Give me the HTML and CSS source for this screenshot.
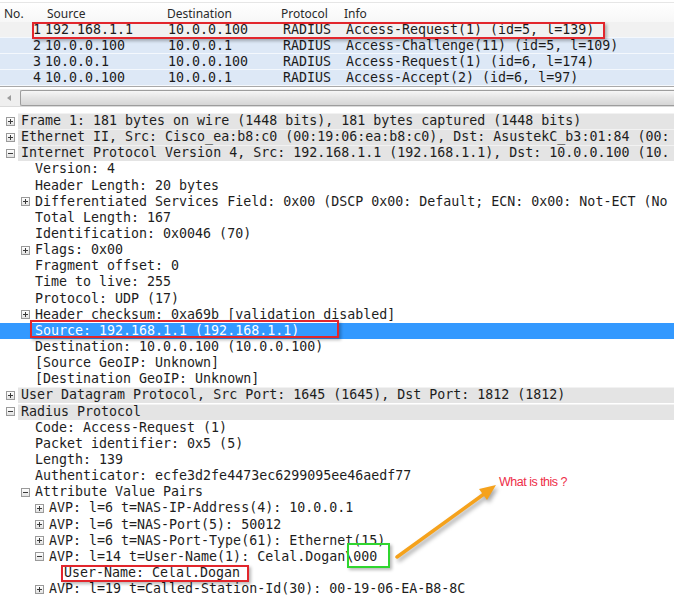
FILE: index.html
```html
<!DOCTYPE html>
<html lang="en">
<head>
    <meta charset="UTF-8">
    <meta name="viewport" content="width=device-width, initial-scale=1.0">
    <title>RADIUS capture</title>
    <link rel="stylesheet" href="styles.css">
</head>
<body>
    <div class="screen">
        <!-- packet list -->
        <div class="plist">
            <div class="prow phead">
                <span class="c-no">No.</span>
                <span class="c-src">Source</span>
                <span>Destination</span>
                <span>Protocol</span>
                <span>Info</span>
            </div>
            <div class="prow pkt first">
                <span class="c-no">1</span>
                <span>192.168.1.1</span>
                <span>10.0.0.100</span>
                <span>RADIUS</span>
                <span>Access-Request(1) (id=5, l=139)</span>
            </div>
            <div class="prow pkt">
                <span class="c-no">2</span>
                <span>10.0.0.100</span>
                <span>10.0.0.1</span>
                <span>RADIUS</span>
                <span>Access-Challenge(11) (id=5, l=109)</span>
            </div>
            <div class="prow pkt">
                <span class="c-no">3</span>
                <span>10.0.0.1</span>
                <span>10.0.0.100</span>
                <span>RADIUS</span>
                <span>Access-Request(1) (id=6, l=174)</span>
            </div>
            <div class="prow pkt">
                <span class="c-no">4</span>
                <span>10.0.0.100</span>
                <span>10.0.0.1</span>
                <span>RADIUS</span>
                <span>Access-Accept(2) (id=6, l=97)</span>
            </div>
        </div>

        <div class="hscroll">
            <span class="arrow-left"></span>
            <div class="thumb"></div>
        </div>

        <!-- packet details -->
        <div class="details">
            <div class="line lv0"><i class="tog plus"></i><span class="txt">Frame 1: 181 bytes on wire (1448 bits), 181 bytes captured (1448 bits)</span></div>
            <div class="line lv0"><i class="tog plus"></i><span class="txt">Ethernet II, Src: Cisco_ea:b8:c0 (00:19:06:ea:b8:c0), Dst: AsustekC_b3:01:84 (00:</span></div>
            <div class="line lv0"><i class="tog minus"></i><span class="txt">Internet Protocol Version 4, Src: 192.168.1.1 (192.168.1.1), Dst: 10.0.0.100 (10.</span></div>
            <div class="line lv1"><i class="tog"></i><span class="txt">Version: 4</span></div>
            <div class="line lv1"><i class="tog"></i><span class="txt">Header Length: 20 bytes</span></div>
            <div class="line lv1"><i class="tog plus"></i><span class="txt">Differentiated Services Field: 0x00 (DSCP 0x00: Default; ECN: 0x00: Not-ECT (No</span></div>
            <div class="line lv1"><i class="tog"></i><span class="txt">Total Length: 167</span></div>
            <div class="line lv1"><i class="tog"></i><span class="txt">Identification: 0x0046 (70)</span></div>
            <div class="line lv1"><i class="tog plus"></i><span class="txt">Flags: 0x00</span></div>
            <div class="line lv1"><i class="tog"></i><span class="txt">Fragment offset: 0</span></div>
            <div class="line lv1"><i class="tog"></i><span class="txt">Time to live: 255</span></div>
            <div class="line lv1"><i class="tog"></i><span class="txt">Protocol: UDP (17)</span></div>
            <div class="line lv1"><i class="tog plus"></i><span class="txt">Header checksum: 0xa69b [validation disabled]</span></div>
            <div class="line lv1 sel"><i class="tog"></i><span class="txt">Source: 192.168.1.1 (192.168.1.1)</span></div>
            <div class="line lv1"><i class="tog"></i><span class="txt">Destination: 10.0.0.100 (10.0.0.100)</span></div>
            <div class="line lv1"><i class="tog"></i><span class="txt">[Source GeoIP: Unknown]</span></div>
            <div class="line lv1"><i class="tog"></i><span class="txt">[Destination GeoIP: Unknown]</span></div>
            <div class="line lv0"><i class="tog plus"></i><span class="txt">User Datagram Protocol, Src Port: 1645 (1645), Dst Port: 1812 (1812)</span></div>
            <div class="line lv0"><i class="tog minus"></i><span class="txt">Radius Protocol</span></div>
            <div class="line lv1"><i class="tog"></i><span class="txt">Code: Access-Request (1)</span></div>
            <div class="line lv1"><i class="tog"></i><span class="txt">Packet identifier: 0x5 (5)</span></div>
            <div class="line lv1"><i class="tog"></i><span class="txt">Length: 139</span></div>
            <div class="line lv1"><i class="tog"></i><span class="txt">Authenticator: ecfe3d2fe4473ec6299095ee46aedf77</span></div>
            <div class="line lv1"><i class="tog minus"></i><span class="txt">Attribute Value Pairs</span></div>
            <div class="line lv2"><i class="tog plus"></i><span class="txt">AVP: l=6 t=NAS-IP-Address(4): 10.0.0.1</span></div>
            <div class="line lv2"><i class="tog plus"></i><span class="txt">AVP: l=6 t=NAS-Port(5): 50012</span></div>
            <div class="line lv2"><i class="tog plus"></i><span class="txt">AVP: l=6 t=NAS-Port-Type(61): Ethernet(15)</span></div>
            <div class="line lv2"><i class="tog minus"></i><span class="txt">AVP: l=14 t=User-Name(1): Celal.Dogan\000</span></div>
            <div class="line lv3"><i class="tog"></i><span class="txt">User-Name: Celal.Dogan</span></div>
            <div class="line lv2"><i class="tog plus"></i><span class="txt">AVP: l=19 t=Called-Station-Id(30): 00-19-06-EA-B8-8C</span></div>
        </div>

        <!-- annotations drawn over the capture -->
        <div class="mark mark-row"></div>
        <div class="mark mark-source"></div>
        <div class="mark mark-user"></div>
        <div class="mark mark-null"></div>
        <svg class="pointer" width="674" height="604" viewBox="0 0 674 604">
            <g class="pointer-shape">
                <line x1="397" y1="557" x2="484" y2="494" stroke="#f5a21c" stroke-width="3.5" stroke-linecap="round"/>
                <polygon points="496,485 487,500 479,489" fill="#f5a21c"/>
            </g>
        </svg>
        <div class="note">What is this ?</div>
    </div>
</body>
</html>
```

FILE: styles.css
```css
body {
    margin: 0;
    padding: 0;
    background-color: #fff;
}

.screen {
    position: relative;
    width: 674px;
    height: 604px;
    overflow: hidden;
    background: #fff;
    color: #1b1b1b;
}

/* packet list */
.plist {
    border-top: 1px solid #e6e6e6;
    margin-top: 2px;
    border-bottom: 1px solid #a9a9a9;
}

.prow {
    display: grid;
    grid-template-columns: 44px 123px 114px 63px 1fr;
    height: 16px;
    line-height: 16px;
    white-space: pre;
    overflow: hidden;
}

.phead {
    height: 17px;
    padding-top: 2px;
    line-height: 17px;
    font-family: "Noto Sans", "DejaVu Sans", sans-serif;
    font-size: 12px;
    color: #2a2a2a;
    background: linear-gradient(#ffffff, #f7f7f7);
}

.phead .c-no {
    padding-left: 4px;
}

.phead .c-src {
    padding-left: 3px;
}

.pkt {
    font-family: "DejaVu Sans Mono", monospace;
    font-size: 13.3px;
    background: #dde8f6;
    border-bottom: 1px solid #f4f8fd;
    box-sizing: border-box;
}

.pkt.first {
    background: #f1f1f1;
}

.pkt span {
    padding-left: 1px;
}

.pkt span:nth-child(4),
.pkt span:nth-child(5) {
    padding-left: 2px;
}

.pkt .c-no {
    text-align: right;
    padding-left: 0;
    padding-right: 3px;
}

/* horizontal scrollbar */
.hscroll {
    display: flex;
    align-items: center;
    height: 17px;
    margin-top: 2px;
    background: #efefef;
    border-bottom: 1px solid #dadada;
}

.arrow-left {
    width: 0;
    height: 0;
    margin: 0 9px 0 7px;
    border-top: 3px solid transparent;
    border-bottom: 3px solid transparent;
    border-right: 4px solid #9c9c9c;
}

.thumb {
    flex: 1;
    height: 14px;
    border: 1px solid #9d9d9d;
    border-right: none;
    border-radius: 2px 0 0 2px;
    background: linear-gradient(#f6f6f6, #e4e4e4 50%, #d6d6d6);
}

/* packet details */
.details {
    height: 485px;
    padding-top: 6px;
    overflow: hidden;
    font-family: "DejaVu Sans Mono", monospace;
    font-size: 13.3px;
    color: #1d1d1d;
}

.line {
    display: flex;
    align-items: center;
    height: 16.15px;
    line-height: 16px;
    white-space: pre;
    overflow: hidden;
}

.lv0 { padding-left: 6px; }
.lv1 { padding-left: 21px; }
.lv2 { padding-left: 35px; }
.lv3 { padding-left: 50px; }

.lv0 .tog {
    margin-right: 6px;
}

.lv0 .txt {
    flex: 1;
    margin-left: -3px;
    padding-left: 3px;
    background: #e4e4e4;
    box-shadow: inset 0 1px #f2f2f2;
}

.line.sel {
    background: #3399ff;
    color: #fff;
}

.tog {
    position: relative;
    flex: none;
    width: 7px;
    height: 7px;
    margin-right: 5px;
    border: 1px solid transparent;
}

.tog.plus,
.tog.minus {
    border-color: #9a9a9a;
    background: linear-gradient(#ffffff, #e2e2e2);
}

.tog.plus::before,
.tog.minus::before {
    content: "";
    position: absolute;
    left: 1px;
    top: 3px;
    width: 5px;
    height: 1px;
    background: #3a3a3a;
}

.tog.plus::after {
    content: "";
    position: absolute;
    left: 3px;
    top: 1px;
    width: 1px;
    height: 5px;
    background: #3a3a3a;
}

/* annotations */
.mark {
    position: absolute;
    box-sizing: border-box;
    border: 2px solid #e2262c;
    box-shadow: 2px 2px 3px rgba(0, 0, 0, 0.28);
}

.mark-row {
    left: 32px;
    top: 22px;
    width: 573px;
    height: 17px;
}

.mark-source {
    left: 30px;
    top: 320px;
    width: 309px;
    height: 18px;
}

.mark-user {
    left: 61px;
    top: 565px;
    width: 188px;
    height: 17px;
}

.mark-null {
    left: 347px;
    top: 543px;
    width: 43px;
    height: 25px;
    border-color: #2fd62f;
}

.pointer {
    position: absolute;
    left: 0;
    top: 0;
    pointer-events: none;
}

.pointer-shape {
    filter: drop-shadow(2px 3px 2px rgba(0, 0, 0, 0.35));
}

.note {
    position: absolute;
    left: 499px;
    top: 475px;
    font-family: "Liberation Sans", Arial, sans-serif;
    font-size: 12.5px;
    letter-spacing: -0.5px;
    color: #ee2d48;
}
```
